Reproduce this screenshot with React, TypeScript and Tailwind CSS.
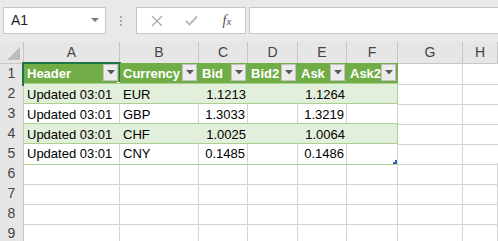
import React from 'react';

const cols = ['A', 'B', 'C', 'D', 'E', 'F', 'G', 'H'];

const headers = ['Header', 'Currency', 'Bid', 'Bid2', 'Ask', 'Ask2'];

const rows = [
  ['Updated 03:01', 'EUR', '1.1213', '', '1.1264', ''],
  ['Updated 03:01', 'GBP', '1.3033', '', '1.3219', ''],
  ['Updated 03:01', 'CHF', '1.0025', '', '1.0064', ''],
  ['Updated 03:01', 'CNY', '0.1485', '', '0.1486', ''],
];

const FilterButton = () => (
  <div className="absolute right-[2px] top-[1px] w-[15px] h-[17px] bg-[#ececec] border border-[#c2c2c2] flex items-center justify-center">
    <svg width="8" height="5" viewBox="0 0 8 5">
      <polygon points="0,0 8,0 4,4.5" fill="#5a5a5a" />
    </svg>
  </div>
);

const App: React.FC = () => {
  const gridCols = 'grid grid-cols-[24px_96px_79px_49px_50px_49px_51px_65px_1fr]';

  return (
    <div
      className="w-[498px] h-[241px] overflow-hidden bg-white select-none"
      style={{ fontFamily: '"Liberation Sans", Arial, sans-serif' }}
    >
      {/* Formula bar */}
      <div className="h-[42px] bg-[#e9e9e9] flex items-start pt-[7px] pl-[3px]">
        <div className="w-[103px] h-[27px] bg-white border border-[#c6c6c6] flex items-center pl-[7px] pr-[6px]">
          <span className="text-[14px] text-[#222] flex-1">A1</span>
          <svg width="8" height="5" viewBox="0 0 8 5">
            <polygon points="0,0 8,0 4,4" fill="#7a7a7a" />
          </svg>
        </div>
        <div className="w-[30px] h-[27px] flex flex-col items-center justify-center gap-[2px]">
          <span className="w-[2px] h-[2px] bg-[#a8a8a8]" />
          <span className="w-[2px] h-[2px] bg-[#a8a8a8]" />
          <span className="w-[2px] h-[2px] bg-[#a8a8a8]" />
        </div>
        <div className="w-[110px] h-[27px] bg-white border border-[#c6c6c6] flex items-center">
          <div className="w-[36px] flex justify-center pl-[4px]">
            <svg width="12" height="12" viewBox="0 0 12 12">
              <path d="M1 1 L11 11 M11 1 L1 11" stroke="#a6a6a6" strokeWidth="1.2" />
            </svg>
          </div>
          <div className="w-[36px] flex justify-center">
            <svg width="13" height="11" viewBox="0 0 13 11">
              <path d="M1 6 L4.5 9.5 L12 1.5" stroke="#bcbcbc" strokeWidth="2" fill="none" />
            </svg>
          </div>
          <div
            className="w-[36px] flex justify-center italic text-[14px] text-[#505050]"
            style={{ fontFamily: '"Liberation Serif", "Times New Roman", serif' }}
          >
            f<span className="text-[11px] mt-[3px]">x</span>
          </div>
        </div>
        <div className="ml-[3px] flex-1 h-[27px] bg-white border border-[#c6c6c6] border-r-0" />
      </div>

      {/* Column headers */}
      <div className={`${gridCols} h-[21px] bg-[#e6e6e6]`}>
        <div className="relative border-r border-b border-[#c6c6c6]">
          <svg className="absolute right-[3px] bottom-[3px]" width="13" height="13" viewBox="0 0 13 13">
            <polygon points="13,0 13,13 0,13" fill="#bcbcbc" />
          </svg>
        </div>
        {cols.map((c) => (
          <div
            key={c}
            className="border-r border-b border-[#c6c6c6] flex items-center justify-center text-[14px] text-[#444]"
          >
            {c}
          </div>
        ))}
      </div>

      {/* Row 1: table header */}
      <div className={`${gridCols} h-[20px]`}>
        <div className="bg-[#e6e6e6] border-r border-b border-[#c6c6c6] flex items-center justify-center text-[14px] text-[#444]">
          1
        </div>
        {headers.map((h, i) => (
          <div
            key={h}
            className="relative bg-[#70ad47] flex items-center pl-[3px] text-[13px] font-bold text-white"
          >
            {h}
            <FilterButton />
            {i === 0 && (
              <>
                <div className="absolute -left-[2px] -top-[1px] -right-[1px] -bottom-[1px] border-2 border-[#217346]" />
                <div className="absolute -right-[3px] -bottom-[3px] w-[6px] h-[6px] bg-[#217346] border border-white" />
              </>
            )}
          </div>
        ))}
        <div className="border-r border-b border-[#d4d4d4]" />
        <div className="border-b border-[#d4d4d4]" />
      </div>

      {/* Data rows */}
      {rows.map((r, ri) => {
        const banded = ri % 2 === 0;
        return (
          <div key={ri} className={`${gridCols} h-[20px]`}>
            <div className="bg-[#e6e6e6] border-r border-b border-[#c6c6c6] flex items-center justify-center text-[14px] text-[#444]">
              {ri + 2}
            </div>
            {r.map((v, ci) => (
              <div
                key={ci}
                className={`relative flex items-center text-[13px] text-black border-t border-[#a9d08e] ${
                  banded ? 'bg-[#e2efda]' : 'bg-white border-r border-r-[#d4d4d4]'
                } ${ci === 5 ? 'border-r border-r-[#a9d08e]' : ''} ${
                  ri === rows.length - 1 ? 'border-b border-b-[#a9d08e]' : ''
                } ${ci === 2 || ci === 4 ? 'justify-end pr-[2px]' : 'pl-[3px]'}`}
              >
                {v}
                {ci === 5 && ri === rows.length - 1 && (
                  <svg className="absolute right-0 bottom-0" width="4" height="4" viewBox="0 0 4 4">
                    <polygon points="2,0 4,0 4,4 0,4 0,2 2,2" fill="#3b5fb0" />
                  </svg>
                )}
              </div>
            ))}
            <div className="border-r border-b border-[#d4d4d4]" />
            <div className="border-b border-[#d4d4d4]" />
          </div>
        );
      })}

      {/* Empty rows */}
      {[6, 7, 8, 9].map((n) => (
        <div key={n} className={`${gridCols} h-[20px]`}>
          <div className="bg-[#e6e6e6] border-r border-b border-[#c6c6c6] flex items-center justify-center text-[14px] text-[#444]">
            {n}
          </div>
          {cols.map((c) => (
            <div key={c} className="border-r border-b border-[#d4d4d4]" />
          ))}
        </div>
      ))}
    </div>
  );
};

export default App;
